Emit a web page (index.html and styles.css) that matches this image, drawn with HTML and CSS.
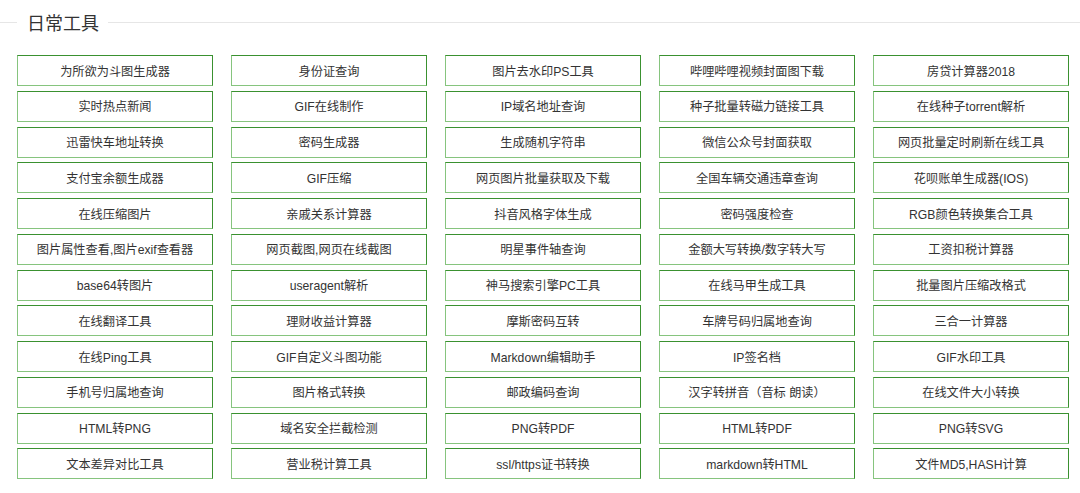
FILE: index.html
```html
<!DOCTYPE html>
<html lang="zh-CN">
<head>
<meta charset="utf-8">
<title>日常工具</title>
<link rel="stylesheet" href="styles.css">
</head>
<body>
<section class="tools">
  <div class="tools-head">
    <span class="line line-left"></span>
    <h2 class="tools-title">日常工具</h2>
    <span class="line line-right"></span>
  </div>
  <div class="tool-grid">
    <a class="tool">为所欲为斗图生成器</a>
    <a class="tool">身份证查询</a>
    <a class="tool">图片去水印PS工具</a>
    <a class="tool">哔哩哔哩视频封面图下载</a>
    <a class="tool">房贷计算器2018</a>

    <a class="tool">实时热点新闻</a>
    <a class="tool">GIF在线制作</a>
    <a class="tool">IP域名地址查询</a>
    <a class="tool">种子批量转磁力链接工具</a>
    <a class="tool">在线种子torrent解析</a>

    <a class="tool">迅雷快车地址转换</a>
    <a class="tool">密码生成器</a>
    <a class="tool">生成随机字符串</a>
    <a class="tool">微信公众号封面获取</a>
    <a class="tool">网页批量定时刷新在线工具</a>

    <a class="tool">支付宝余额生成器</a>
    <a class="tool">GIF压缩</a>
    <a class="tool">网页图片批量获取及下载</a>
    <a class="tool">全国车辆交通违章查询</a>
    <a class="tool">花呗账单生成器(IOS)</a>

    <a class="tool">在线压缩图片</a>
    <a class="tool">亲戚关系计算器</a>
    <a class="tool">抖音风格字体生成</a>
    <a class="tool">密码强度检查</a>
    <a class="tool">RGB颜色转换集合工具</a>

    <a class="tool">图片属性查看,图片exif查看器</a>
    <a class="tool">网页截图,网页在线截图</a>
    <a class="tool">明星事件轴查询</a>
    <a class="tool">金额大写转换/数字转大写</a>
    <a class="tool">工资扣税计算器</a>

    <a class="tool">base64转图片</a>
    <a class="tool">useragent解析</a>
    <a class="tool">神马搜索引擎PC工具</a>
    <a class="tool">在线马甲生成工具</a>
    <a class="tool">批量图片压缩改格式</a>

    <a class="tool">在线翻译工具</a>
    <a class="tool">理财收益计算器</a>
    <a class="tool">摩斯密码互转</a>
    <a class="tool">车牌号码归属地查询</a>
    <a class="tool">三合一计算器</a>

    <a class="tool">在线Ping工具</a>
    <a class="tool">GIF自定义斗图功能</a>
    <a class="tool">Markdown编辑助手</a>
    <a class="tool">IP签名档</a>
    <a class="tool">GIF水印工具</a>

    <a class="tool">手机号归属地查询</a>
    <a class="tool">图片格式转换</a>
    <a class="tool">邮政编码查询</a>
    <a class="tool">汉字转拼音（音标 朗读）</a>
    <a class="tool">在线文件大小转换</a>

    <a class="tool">HTML转PNG</a>
    <a class="tool">域名安全拦截检测</a>
    <a class="tool">PNG转PDF</a>
    <a class="tool">HTML转PDF</a>
    <a class="tool">PNG转SVG</a>

    <a class="tool">文本差异对比工具</a>
    <a class="tool">营业税计算工具</a>
    <a class="tool">ssl/https证书转换</a>
    <a class="tool">markdown转HTML</a>
    <a class="tool">文件MD5,HASH计算</a>
  </div>
</section>
</body>
</html>
```

FILE: styles.css
```css
* { box-sizing: border-box; }

html, body {
  margin: 0;
  padding: 0;
  background: #ffffff;
  overflow: hidden;
}

body {
  font-family: "Liberation Sans", "Noto Sans CJK SC", sans-serif;
  color: #333333;
}

.tools {
  padding: 10px 11px 0 17px;
}

.tools-head {
  display: flex;
  align-items: center;
  height: 24px;
  margin-left: -17px;
  margin-right: -11px;
}

.line {
  height: 1px;
  background: #e6e6e6;
}

.line-left { width: 17px; }
.line-right { flex: 1; }

.tools-title {
  margin: 0;
  padding: 0 9px 0 10px;
  font-size: 18px;
  font-weight: normal;
  line-height: 24px;
  color: #333333;
  font-family: "Noto Sans CJK SC", "Liberation Sans", sans-serif;
}

.tool-grid {
  display: grid;
  grid-template-columns: repeat(5, 196px);
  column-gap: 18px;
  row-gap: 4.75px;
  margin-top: 21px;
}

.tool {
  display: flex;
  align-items: center;
  justify-content: center;
  height: 31px;
  border-top: 1px solid #3a9130;
  border-right: 1px solid #3a9130;
  border-left: 1px solid #86c47e;
  border-bottom: 1px solid #86c47e;
  font-size: 12.2px;
  color: #333333;
  white-space: nowrap;
  text-decoration: none;
}
```
